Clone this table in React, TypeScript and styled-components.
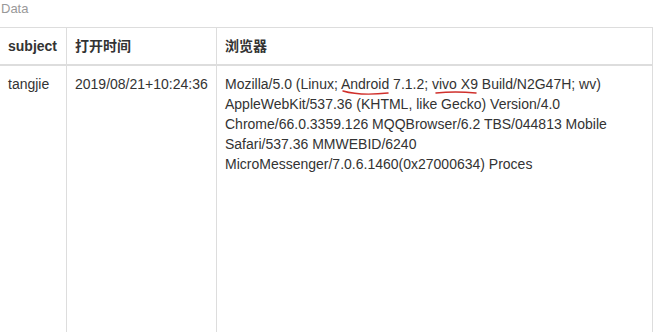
import React from "react";
import styled, { createGlobalStyle } from "styled-components";

const GlobalStyle = createGlobalStyle`
  html, body { margin: 0; padding: 0; background: #fff; }
  body {
    overflow: hidden;
    font-family: "Liberation Sans", Arial, "Noto Sans CJK SC", sans-serif;
    font-size: 14px;
    line-height: 20px;
    color: #333;
  }
`;

const Page = styled.div`
  width: 653px;
  height: 332px;
  overflow: hidden;
`;

const Caption = styled.div`
  height: 27px;
  box-sizing: border-box;
  padding-left: 1px;
  font-size: 13px;
  line-height: 18px;
  color: #999;
`;

const Grid = styled.div`
  display: grid;
  grid-template-columns: 67px 150px 436px;
  border-top: 1px solid #ddd;
`;

const HeadCell = styled.div`
  box-sizing: border-box;
  padding: 8px;
  border-right: 1px solid #ddd;
  border-bottom: 2px solid #ddd;
  font-weight: bold;
  color: #333;
  white-space: nowrap;
`;

const BodyCell = styled.div`
  position: relative;
  box-sizing: border-box;
  min-height: 300px;
  padding: 8px;
  border-right: 1px solid #ddd;
  white-space: pre-line;
  color: #333;
`;

const Marks = styled.svg`
  position: absolute;
  left: 0;
  top: 0;
  width: 436px;
  height: 120px;
  pointer-events: none;
  overflow: visible;
`;

const ua = [
  "Mozilla/5.0 (Linux; Android 7.1.2; vivo X9 Build/N2G47H; wv)",
  "AppleWebKit/537.36 (KHTML, like Gecko) Version/4.0",
  "Chrome/66.0.3359.126 MQQBrowser/6.2 TBS/044813 Mobile",
  "Safari/537.36 MMWEBID/6240",
  "MicroMessenger/7.0.6.1460(0x27000634) Proces",
].join("\n");

export default function App() {
  return (
    <Page>
      <GlobalStyle />
      <Caption>Data</Caption>
      <Grid>
        <HeadCell>subject</HeadCell>
        <HeadCell>打开时间</HeadCell>
        <HeadCell>浏览器</HeadCell>
        <BodyCell>tangjie</BodyCell>
        <BodyCell>2019/08/21+10:24:36</BodyCell>
        <BodyCell>
          {ua}
          <Marks viewBox="0 0 436 120">
            <path d="M126 25 Q143 30 171 27" fill="none" stroke="#d0302c" strokeWidth="1.5" strokeLinecap="round" />
            <path d="M219 27 Q238 25 259 27" fill="none" stroke="#d0302c" strokeWidth="1.5" strokeLinecap="round" />
          </Marks>
        </BodyCell>
      </Grid>
    </Page>
  );
}
